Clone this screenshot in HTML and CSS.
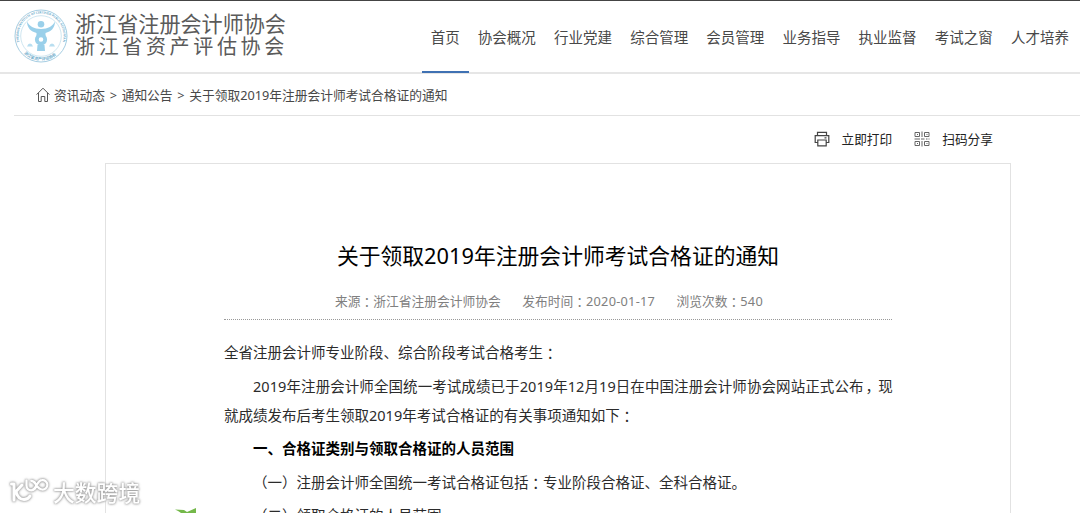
FILE: index.html
```html
<!DOCTYPE html>
<html lang="zh-CN">
<head>
<meta charset="utf-8">
<title>关于领取2019年注册会计师考试合格证的通知</title>
<link rel="stylesheet" href="styles.css">
</head>
<body>
<header class="header">
  <div class="brand">
    <svg class="emblem" viewBox="0 0 54 54" width="54" height="54">
      <defs>
        <path id="arc-top" d="M5.2 33A22.6 22.6 0 1 1 48.8 33"/>
        <path id="arc-bottom" d="M10 44.5A24.4 24.4 0 0 0 44 44.5"/>
      </defs>
      <circle cx="27" cy="27" r="26" fill="#fff" stroke="#a5cde2" stroke-width="1"/>
      <circle cx="27" cy="27" r="20.3" fill="none" stroke="#c3dfec" stroke-width=".8"/>
      <text class="emblem-en"><textPath href="#arc-top" textLength="86">ZHEJIANG INSTITUTE OF CERTIFIED PUBLIC ACCOUNTANTS</textPath></text>
      <text class="emblem-cn"><textPath href="#arc-bottom" textLength="35">浙江省资产评估协会</textPath></text>
      <g fill="#9ad0ea">
        <circle cx="27" cy="15.300" r="3.300"/>
        <path d="M13 12.500C15 17 20 20 27 20S39 17 41 12.500C41 19 37 22.500 31.500 24V27H22.500V24C17 22.500 13 19 13 12.500Z"/>
        <path d="M23.500 36H30.500L31 42H23Z"/>
        <path d="M13 37.500h6q-1-3-3-3t-3 3ZM35 37.500h6q-1-3-3-3t-3 3Z" opacity=".7"/>
      </g>
      <circle cx="27" cy="30.500" r="4.200" fill="#fff" stroke="#9ad0ea" stroke-width="3.800"/>
    </svg>
    <div class="brand-names">
      <div class="brand-name">浙江省注册会计师协会</div>
      <div class="brand-name brand-name-wide">浙江省资产评估协会</div>
    </div>
  </div>
  <nav class="nav">
    <a class="nav-item active">首页</a>
    <a class="nav-item">协会概况</a>
    <a class="nav-item">行业党建</a>
    <a class="nav-item">综合管理</a>
    <a class="nav-item">会员管理</a>
    <a class="nav-item">业务指导</a>
    <a class="nav-item">执业监督</a>
    <a class="nav-item">考试之窗</a>
    <a class="nav-item">人才培养</a>
  </nav>
</header>
<div class="crumbs">
  <svg class="home" viewBox="0 0 14 16" width="14" height="16" fill="none" stroke="#555" stroke-width="1"><path d="M.6 7.600L7 1.200L13.400 7.600M2.500 6V14.500H5.200V9.500H8.800V14.500H11.500V6"/></svg>
  <span>资讯动态</span><span class="sep">&gt;</span><span>通知公告</span><span class="sep">&gt;</span><span>关于领取2019年注册会计师考试合格证的通知</span>
</div>
<div class="actions">
  <a class="action">
    <svg viewBox="0 0 16 16" width="16" height="16" fill="none" stroke="#444" stroke-width="1.200"><path d="M3.500 4.500V1.300H12.500V4.500M3.500 11.500H1.200V4.600H14.800V11.500H12.500M3.800 9H12.200V14.800H3.800ZM10.500 6.800H12.500"/></svg>
    <span>立即打印</span>
  </a>
  <a class="action">
    <svg viewBox="0 0 16 16" width="16" height="16" fill="none" stroke="#666" stroke-width="1"><path d="M1 1.500H5.500V5.500H1ZM10.500 1.500H15V5.500H10.500ZM1 10.500H5.500V14.500H1ZM10.500 10.500H15V14.500H10.500ZM8 .5V6M.5 8H6M7 8H10.500M12 8H13.500M14.500 8H15.500M8 10V15.500M3 3.500H4M12.500 3.500H13.500M3 12.500H4M12.500 12.500H13.500"/></svg>
    <span>扫码分享</span>
  </a>
</div>
<main class="card">
  <h1 class="title">关于领取2019年注册会计师考试合格证的通知</h1>
  <div class="meta">
    <span>来源<i class="mid" lang="zh-TW">：</i>浙江省注册会计师协会</span>
    <span>发布时间<i class="mid" lang="zh-TW">：</i><span class="digits">2020-01-17</span></span>
    <span>浏览次数<i class="mid" lang="zh-TW">：</i><span class="digits">540</span></span>
  </div>
  <article class="content">
    <p>全省注册会计师专业阶段、综合阶段考试合格考生<i class="mid" lang="zh-TW">：</i></p>
    <p class="indent"><span class="justified">2019年注册会计师全国统一考试成绩已于2019年12月19日在中国注册会计师协会网站正式公布<i class="comma">，</i>现</span><br>就成绩发布后考生领取2019年考试合格证的有关事项通知如下<i class="mid" lang="zh-TW">：</i></p>
    <p class="indent"><strong>一、合格证类别与领取合格证的人员范围</strong></p>
    <p class="indent">（一）注册会计师全国统一考试合格证包括<i class="mid" lang="zh-TW">：</i>专业阶段合格证、全科合格证。</p>
    <p class="indent">（二）领取合格证的人员范围</p>
  </article>
</main>
<svg class="leaf" viewBox="0 0 24 5" width="24" height="5"><path d="M0 1.500L9 2L12 4L21 0V5H6Q4 3 0 1.500Z" fill="#74b84a"/></svg>
<div class="watermark">
  <svg viewBox="0 0 40 28" width="40" height="28" fill="none" stroke="#fff" stroke-width="3" stroke-linecap="round" stroke-linejoin="round"><path d="M2.500 8H5V24M13 9L7 15.500Q9 23.500 15 23.500Q19 23.500 21 20"/><path stroke-width="2.200" d="M17.500 4.500V9.500A4.800 4.800 0 1 0 22.300 4.800C27 4.800 27.500 13.500 33 13.500A4.700 4.700 0 1 0 33 4.200C28 4.200 27.500 13.500 22.300 14.300"/></svg>
  <span>大数跨境</span>
</div>
</body>
</html>
```

FILE: styles.css
```css
* { box-sizing: border-box; }
html, body { height: 100%; }
body {
  margin: 0;
  overflow: hidden;
  position: relative;
  display: flex;
  flex-direction: column;
  background: #fff;
  color: #2b2b2b;
  font-family: "Noto Sans", "Noto Sans CJK SC", sans-serif;
  white-space: nowrap;
}
i { font-style: normal; }
.mid {
  position: relative;
  top: 1px;
  font-family: "Noto Sans CJK TC", sans-serif;
  line-height: 0;
}
.comma { position: relative; left: 2px; }
.digits { letter-spacing: .25px; }
.justified { letter-spacing: .075px; }

.header {
  flex: none;
  display: flex;
  justify-content: space-between;
  height: 74px;
  border-top: 1px solid #444;
  border-bottom: 2px solid #e6e6e6;
}
.brand { display: flex; padding: 8px 0 0 14px; gap: 7px; }
.emblem-en { font-size: 3px; font-weight: 700; fill: #6faccb; }
.emblem-cn { font-size: 4px; font-weight: 700; fill: #6faccb; }
.brand-names { padding-top: 3px; }
.brand-name { font-size: 21.1px; line-height: 23px; color: #5a5a5a; }
.brand-name-wide { font-size: 20px; letter-spacing: 3.650px; }

.nav { display: flex; margin-right: 2px; }
.nav-item {
  height: 72px;
  padding: 0 9.080px;
  font-size: 14.5px;
  line-height: 72px;
  color: #484848;
}
.nav-item.active { border-bottom: 2px solid #3f71b3; }

.crumbs {
  flex: none;
  display: flex;
  align-items: center;
  height: 42px;
  margin-left: 14px;
  padding-left: 22px;
  border-bottom: 1px solid #e2e2e2;
  font-size: 12.730px;
  color: #484848;
}
.home { margin-right: 4px; }
.sep { width: 16.800px; text-align: center; }

.actions {
  flex: none;
  display: flex;
  justify-content: flex-end;
  gap: 22px;
  height: 47px;
  padding: 0 87px 2px 0;
  font-size: 12.700px;
  color: #222;
}
.action { display: flex; align-items: center; gap: 12px; }

.card {
  flex: 1;
  min-height: 0;
  overflow: hidden;
  width: 906px;
  margin-left: 105px;
  padding: 72px 118px 0;
  border: 1px solid #e2e2e2;
  border-bottom: 0;
}
.title {
  margin: 0;
  text-align: center;
  font-size: 21.800px;
  line-height: 40px;
  font-weight: 400;
  color: #000;
}
.meta {
  display: flex;
  justify-content: center;
  gap: 21.500px;
  height: 44px;
  padding: 10px 18px 0 0;
  border-bottom: 1px dotted #999;
  font-size: 12.750px;
  line-height: 30px;
  color: #808080;
}
.content { padding-top: 18px; font-size: 14.500px; line-height: 29px; }
.content p { margin: 0 0 4.500px; }
.indent { text-indent: 2em; }
.content strong { color: #000; font-weight: 700; }

.leaf { position: absolute; left: 175px; top: 508px; }
.watermark {
  position: absolute;
  left: 9px;
  top: 476px;
  display: flex;
  gap: 4px;
  color: #fff;
  font-size: 21.800px;
  font-weight: 500;
  line-height: 34px;
  filter: drop-shadow(0 0 1px #999) drop-shadow(0 0 1px #bbb);
}
```
